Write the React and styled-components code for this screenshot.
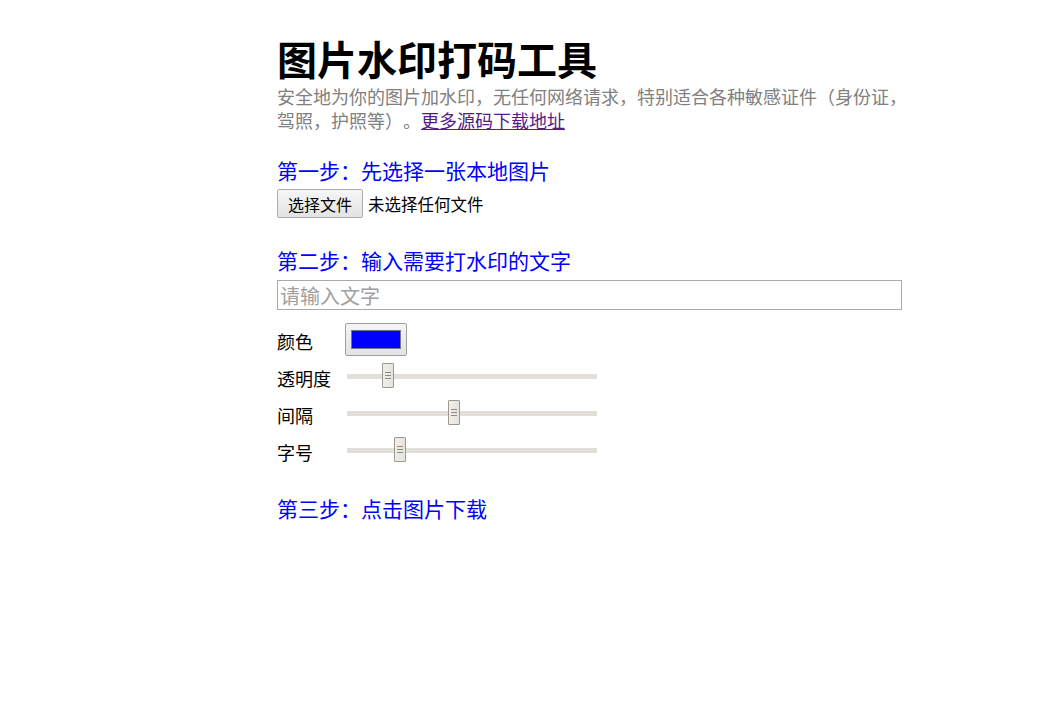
import React, { useState } from 'react';
import styled, { createGlobalStyle } from 'styled-components';

const GlobalStyle = createGlobalStyle`
  html, body {
    margin: 0;
    padding: 0;
    background: #ffffff;
  }
  body {
    font-family: "Noto Sans CJK SC", "Noto Sans", sans-serif;
    font-size: 18px;
    color: #000000;
    text-spacing-trim: space-all;
  }
`;

const Page = styled.div`
  padding: 34px 0 40px 277px;
  width: 640px;
`;

const Title = styled.h1`
  margin: 0;
  font-size: 40px;
  line-height: 48px;
  font-weight: 700;
`;

const Intro = styled.p`
  margin: 2px 0 0;
  color: #808080;
  font-size: 18px;
  line-height: 24px;
`;

const SourceLink = styled.a`
  color: #551a8b;
  text-decoration: underline;
`;

const Step = styled.h3`
  margin: ${(p) => p.$top}px 0 0;
  color: #0000ff;
  font-size: 21px;
  line-height: 28px;
  font-weight: 400;
`;

const FileRow = styled.div`
  display: flex;
  align-items: center;
  gap: 5px;
  margin-top: 5px;
`;

const HiddenInput = styled.input`
  display: none;
`;

const FileButton = styled.label`
  box-sizing: border-box;
  height: 29px;
  padding: 0 10px;
  display: flex;
  align-items: center;
  font-size: 16px;
  border: 1px solid #adadad;
  border-radius: 2px;
  background: linear-gradient(#f6f6f6, #e3e3e3);
  cursor: default;
`;

const FileName = styled.span`
  font-size: 16.5px;
`;

const TextInput = styled.input`
  box-sizing: border-box;
  display: block;
  width: 625px;
  height: 30px;
  margin-top: 6px;
  padding: 0 2px;
  border: 1px solid #a9a9a9;
  font-family: inherit;
  font-size: 20px;
  outline: none;

  &::placeholder {
    color: #a0a0a0;
  }
`;

const Row = styled.div`
  display: flex;
  align-items: center;
  margin-top: ${(p) => p.$top}px;
`;

const Label = styled.span`
  width: 68px;
  flex: none;
  padding-top: ${(p) => p.$drop}px;
  line-height: 22px;
`;

const ColorInput = styled.input`
  -webkit-appearance: none;
  appearance: none;
  box-sizing: border-box;
  width: 62px;
  height: 33px;
  padding: 0;
  border: 1px solid #a0a0a0;
  border-radius: 2px;
  background: linear-gradient(#f5f5f5, #e2e2e2);
  cursor: default;

  &::-webkit-color-swatch-wrapper {
    padding: 6px 5px;
  }
  &::-webkit-color-swatch {
    border: 1px solid #777777;
    border-radius: 0;
  }
`;

const Range = styled.input`
  -webkit-appearance: none;
  appearance: none;
  width: 250px;
  height: 25px;
  margin: 0 0 0 2px;
  background: transparent;

  &::-webkit-slider-runnable-track {
    height: 5px;
    background: #e2dfda;
    border: none;
  }
  &::-webkit-slider-thumb {
    -webkit-appearance: none;
    box-sizing: border-box;
    width: 12px;
    height: 25px;
    margin-top: -11px;
    border: 1px solid #9c9891;
    border-radius: 1px;
    background:
      linear-gradient(#8f8a83, #8f8a83) center 8px / 6px 1px no-repeat,
      linear-gradient(#8f8a83, #8f8a83) center 11px / 6px 1px no-repeat,
      linear-gradient(#8f8a83, #8f8a83) center 14px / 6px 1px no-repeat,
      linear-gradient(90deg, #f1eeea, #e6e2dc);
  }
`;

const sliders = [
  { key: 'alpha', label: '透明度', value: 14.6 },
  { key: 'space', label: '间隔', value: 42.3 },
  { key: 'size', label: '字号', value: 19.7 },
];

export default function App() {
  const [text, setText] = useState('');
  const [color, setColor] = useState('#0000ff');
  const [values, setValues] = useState(
    Object.fromEntries(sliders.map((s) => [s.key, s.value]))
  );

  return (
    <Page>
      <GlobalStyle />
      <Title>图片水印打码工具</Title>
      <Intro>
        安全地为你的图片加水印，无任何网络请求，特别适合各种敏感证件（身份证，驾照，护照等）。
        <SourceLink href="#">更多源码下载地址</SourceLink>
      </Intro>

      <Step $top={24}>第一步：先选择一张本地图片</Step>
      <FileRow>
        <FileButton htmlFor="file">选择文件</FileButton>
        <HiddenInput id="file" type="file" accept="image/*" />
        <FileName>未选择任何文件</FileName>
      </FileRow>

      <Step $top={28}>第二步：输入需要打水印的文字</Step>
      <TextInput
        placeholder="请输入文字"
        value={text}
        onChange={(e) => setText(e.target.value)}
      />

      <Row $top={13}>
        <Label $drop={2}>颜色</Label>
        <ColorInput type="color" value={color} onChange={(e) => setColor(e.target.value)} />
      </Row>
      {sliders.map((s, i) => (
        <Row key={s.key} $top={i === 0 ? 8 : 12}>
          <Label $drop={3}>{s.label}</Label>
          <Range
            type="range"
            min="0"
            max="100"
            step="any"
            value={values[s.key]}
            onChange={(e) => setValues({ ...values, [s.key]: Number(e.target.value) })}
          />
        </Row>
      ))}

      <Step $top={31}>第三步：点击图片下载</Step>
    </Page>
  );
}
